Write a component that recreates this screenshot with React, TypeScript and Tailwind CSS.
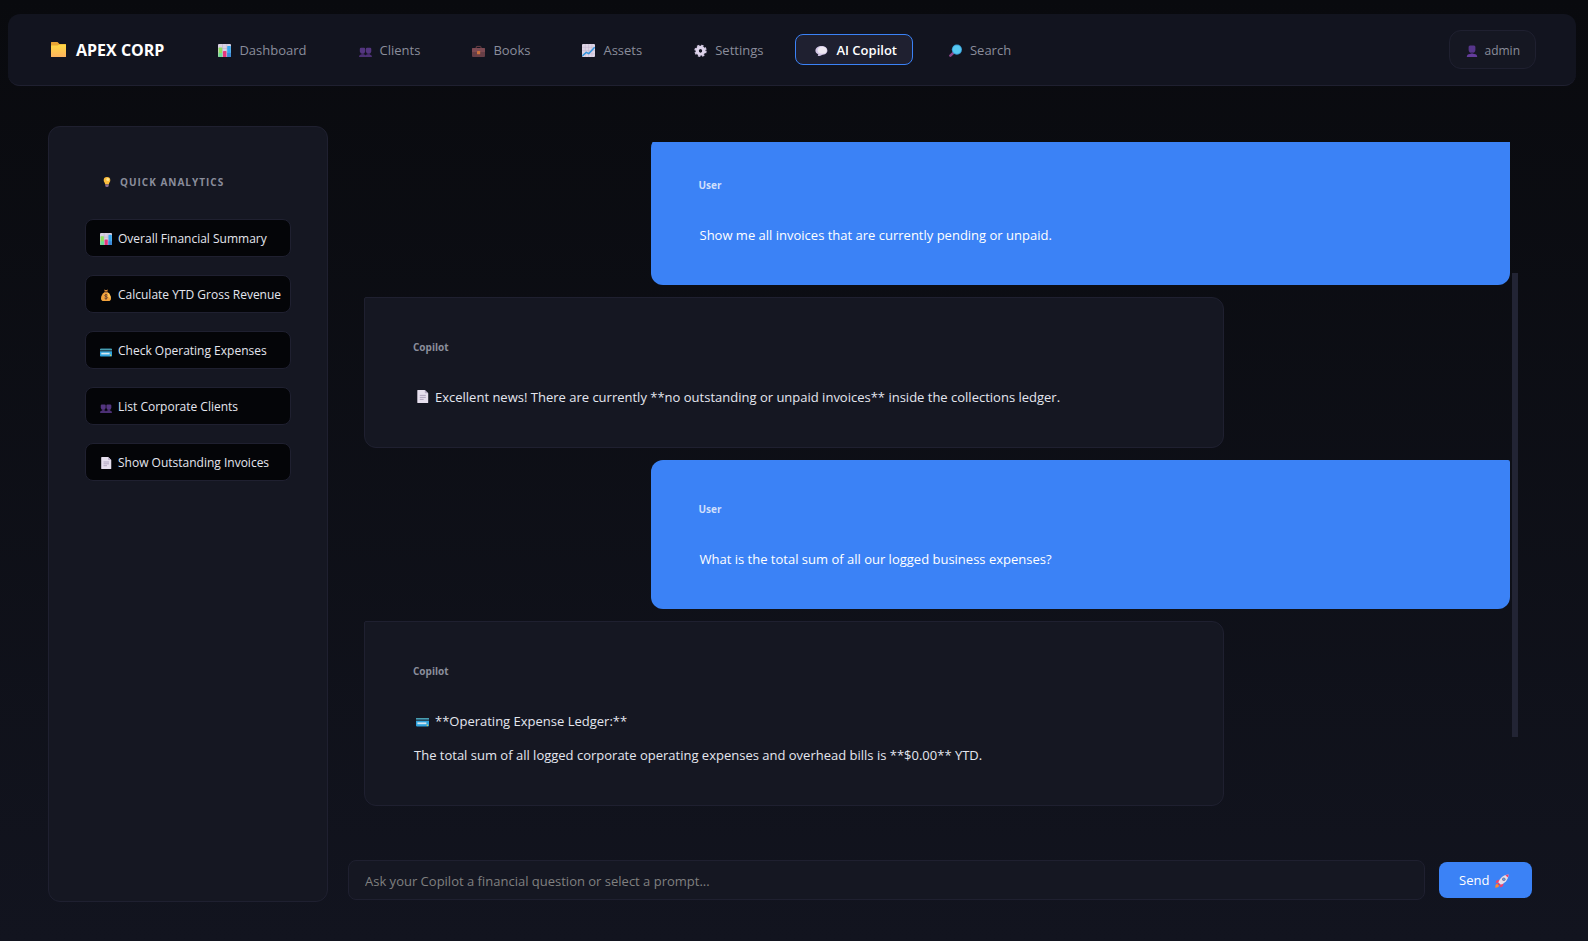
import React, { useState } from 'react';

interface IconProps {
  className?: string;
}

const FolderIcon: React.FC<IconProps> = ({ className }) => (
  <svg viewBox="0 0 15 15" className={className} aria-hidden="true">
    <defs>
      <linearGradient id="folder" x1="0" y1="0" x2="0" y2="1">
        <stop offset="0" stopColor="#ffd944" />
        <stop offset="1" stopColor="#fdb35e" />
      </linearGradient>
    </defs>
    <path d="M0 0.5Q0 0 .5 0H6.5L8.5 2H14.5Q15 2 15 2.5V8H0Z" fill="#e8a435" />
    <path d="M0 3.6H6.5L8.5 2.6H15V14.5Q15 15 14.5 15H.5Q0 15 0 14.5Z" fill="url(#folder)" />
  </svg>
);

const BarChartIcon: React.FC<IconProps> = ({ className }) => (
  <svg viewBox="0 0 13 13" className={className} aria-hidden="true">
    <rect width="13" height="13" rx="1" fill="#d9d0e2" />
    <path d="M0 4.5H13M0 8.5H13M4.5 0V13M8.8 0V13" stroke="#b9adc6" strokeWidth=".5" />
    <path d="M.6 4Q.6 3.4 1.2 3.4H3.6Q4.2 3.4 4.2 4V13H.6Z" fill="#8ee05c" />
    <path d="M.6 9H4.2V13H.6Z" fill="#6ddb9a" />
    <path d="M5 7.6Q5 7 5.6 7H7.8Q8.4 7 8.4 7.6V13H5Z" fill="#e8357c" />
    <path d="M9.2 2.6Q9.2 2 9.8 2H12.2Q12.8 2 12.8 2.6V13H9.2Z" fill="#35a5ee" />
    <path d="M9.2 9H12.8V13H9.2Z" fill="#3b86d6" />
  </svg>
);

const PeopleIcon: React.FC<IconProps> = ({ className }) => (
  <svg viewBox="0 0 13 13" className={className} aria-hidden="true">
    <path
      d="M.8 5Q.8 3.8 2 3.8H5Q6.2 3.8 6.2 5V7.4Q6 9.8 3.6 9.8T.8 7.4ZM6.9 5Q6.9 3.8 8.1 3.8H11.1Q12.3 3.8 12.3 5V7.4Q12.1 9.8 9.6 9.8T6.9 7.4Z"
      fill="#53357f"
    />
    <path d="M2.4 9.2H4.8V10.8H2.4ZM8.4 9.2H10.8V10.8H8.4Z" fill="#472c6d" />
    <path d="M0 13Q0 10.4 2.4 10.4H5Q6.4 10.4 6.5 11.5Q6.7 10.4 8 10.4H10.8Q13 10.4 13 13Z" fill="#4c3075" />
  </svg>
);

const BriefcaseIcon: React.FC<IconProps> = ({ className }) => (
  <svg viewBox="0 0 13 13" className={className} aria-hidden="true">
    <path d="M4.2 4.2V3Q4.2 2.4 4.8 2.4H8.4Q9 2.4 9 3V4.2" fill="none" stroke="#6d4047" strokeWidth="1" />
    <rect y="4" width="13" height="9" rx="1" fill="#673e46" />
    <path d="M0 4.8Q0 4 1 4H12Q13 4 13 4.8V8H0Z" fill="#7d4a52" />
    <rect x="5" y="7" width="3.2" height="3.2" rx=".5" fill="#c9713c" />
  </svg>
);

const LineChartIcon: React.FC<IconProps> = ({ className }) => (
  <svg viewBox="0 0 13 13" className={className} aria-hidden="true">
    <rect width="13" height="13" rx="1" fill="#ded5e6" />
    <path d="M0 3.3H13M0 6.6H13M0 9.9H13M3.3 0V13M6.6 0V13M9.9 0V13" stroke="#bfb3cc" strokeWidth=".5" />
    <path d="M.4 12L4.3 8.3L6.8 9.6L12.7 3.2" fill="none" stroke="#2f94dd" strokeWidth="1.5" />
  </svg>
);

const GearIcon: React.FC<IconProps> = ({ className }) => (
  <svg viewBox="0 0 13 13" className={className} aria-hidden="true">
    <circle cx="6.5" cy="6.8" r="5.4" fill="none" stroke="#cfc4de" strokeWidth="1.6" strokeDasharray="2.4 1.84" />
    <circle cx="6.5" cy="6.8" r="3.3" fill="none" stroke="#ddd3ea" strokeWidth="3.4" />
    <circle cx="6.5" cy="6.8" r="1.6" fill="#1a1a27" />
  </svg>
);

const BubbleIcon: React.FC<IconProps> = ({ className }) => (
  <svg viewBox="0 0 13 13" className={className} aria-hidden="true">
    <path
      d="M6.6 2C10 2 12.4 3.9 12.4 6.6S10 11 6.8 11C6 11.6 4.2 12.2 2.6 12C3.3 11.4 3.3 10.8 3.1 10.2C1.4 9.5.4 8.2.4 6.6C.4 3.9 3.2 2 6.6 2Z"
      fill="#d3c6e6"
    />
    <ellipse cx="7.2" cy="6.2" rx="4.5" ry="3.5" fill="#eee9f2" />
  </svg>
);

const SearchIcon: React.FC<IconProps> = ({ className }) => (
  <svg viewBox="0 0 13 13" className={className} aria-hidden="true">
    <path d="M1.4 11.6L4.8 8.4" stroke="#8b4688" strokeWidth="2.6" strokeLinecap="round" />
    <circle cx="7.9" cy="5.6" r="5.1" fill="#3aa0d8" />
    <circle cx="7.9" cy="5.6" r="4.1" fill="#56c8f0" />
  </svg>
);

const PersonIcon: React.FC<IconProps> = ({ className }) => (
  <svg viewBox="0 0 12 12" className={className} aria-hidden="true">
    <path d="M2.6 2Q2.6 .5 4 .5H8Q9.4 .5 9.4 2V5Q9.2 8 6 8T2.6 5Z" fill="#56358a" />
    <path d="M4.6 7H7.4V9.4H4.6Z" fill="#3f2765" />
    <path d="M.8 12Q.8 9 3.8 9H8.2Q11.2 9 11.2 12Z" fill="#643c9c" />
  </svg>
);

const BulbIcon: React.FC<IconProps> = ({ className }) => (
  <svg viewBox="0 0 10 10" className={className} aria-hidden="true">
    <path d="M5 0Q8.3 0 8.3 3.2C8.3 5 7 5.6 6.8 7.4H3.2C3 5.6 1.7 5 1.7 3.2Q1.7 0 5 0Z" fill="#fcbd3c" />
    <circle cx="5.8" cy="2.6" r="1.5" fill="#ffe58f" />
    <path d="M3.3 7.4H6.7V9Q6.6 10 5 10T3.3 9Z" fill="#8d6f96" />
  </svg>
);

const MoneyBagIcon: React.FC<IconProps> = ({ className }) => (
  <svg viewBox="0 0 12 12" className={className} aria-hidden="true">
    <path d="M4.2 .6L6 1.2L7.8 .4L7.3 2.6H4.8Z" fill="#f09a3a" />
    <path d="M4.6 3H7.5C9.5 4.4 11 6.8 11 9.2Q11 12 8.5 12H3.6Q1 12 1 9.2C1 6.8 2.6 4.4 4.6 3Z" fill="#f2a33c" />
    <path d="M7.5 3.6C9.5 4.8 10.7 7 10.6 9.2L8.4 8Z" fill="#ffc65b" />
    <path d="M4.4 2.6H7.7V3.5H4.4Z" fill="#8a5330" />
    <path
      d="M7.3 6.1Q6.9 5.6 6 5.6C4.4 5.6 4.4 7.5 6 7.6C7.8 7.7 7.7 9.8 6 9.8Q5 9.8 4.5 9.1M6 4.9V10.6"
      fill="none"
      stroke="#6e4530"
      strokeWidth="1"
    />
  </svg>
);

const CardIcon: React.FC<IconProps> = ({ className }) => (
  <svg viewBox="0 0 13 13" className={className} aria-hidden="true">
    <rect y="4" width="13" height="8.4" rx=".8" fill="#2fa3de" />
    <path d="M0 5.4V4.8Q0 4 .8 4H12.2Q13 4 13 4.8V5.4Z" fill="#4a9fb0" />
    <path d="M0 5.4H13V7H0Z" fill="#264a5b" />
    <path d="M1.4 8.4H10.4V10.2H1.4Z" fill="#d4e6ef" />
    <circle cx="11.4" cy="11.2" r=".8" fill="#e7cf4a" />
  </svg>
);

const DocumentIcon: React.FC<IconProps> = ({ className }) => (
  <svg viewBox="0 0 13 13" className={className} aria-hidden="true">
    <path d="M1.3 .6Q1.3 0 2 0H8.8L12.2 3.2V12.4Q12.2 13 11.6 13H2Q1.3 13 1.3 12.4Z" fill="#e6dfee" />
    <path d="M8.8 0L12.2 3.2H9.4Q8.8 3.2 8.8 2.6Z" fill="#b9adc8" />
    <path d="M3.8 5.4H9.8M3.8 7.4H9.8M3.8 9.4H7.6" stroke="#a89cb8" strokeWidth=".9" />
  </svg>
);

const RocketIcon: React.FC<IconProps> = ({ className }) => (
  <svg viewBox="0 0 14 14" className={className} aria-hidden="true">
    <path d="M4.4 5.4L1.6 6.6Q.6 8 .8 9.2L4 8.6ZM8.8 9.6L7.6 12.6Q6 13.6 4.8 13.2L5.6 10Z" fill="#f0406e" />
    <path d="M2.2 9.6Q0 10.6.2 13.8Q3.2 14 4.4 11.8Z" fill="#ff8a2e" />
    <path d="M2.6 10.2L5 7.6L6.8 9.2L4 11.6Z" fill="#e83a66" />
    <path d="M3.4 8.4C4.6 4 8.2 .9 13.6.4C13.1 5.8 10 9.4 5.6 10.6Z" fill="#e4dfea" />
    <path d="M10.4 1.2Q11.8.6 13.6.4Q13.4 2.2 12.8 3.6Z" fill="#f0406e" />
    <circle cx="8.8" cy="5.2" r="1.7" fill="#7a6b99" />
    <circle cx="8.8" cy="5.2" r="1" fill="#53a7e8" />
  </svg>
);

const navItems = [
  { label: 'Dashboard', Icon: BarChartIcon },
  { label: 'Clients', Icon: PeopleIcon },
  { label: 'Books', Icon: BriefcaseIcon },
  { label: 'Assets', Icon: LineChartIcon },
  { label: 'Settings', Icon: GearIcon },
  { label: 'AI Copilot', Icon: BubbleIcon },
  { label: 'Search', Icon: SearchIcon },
];

const quickPrompts = [
  { label: 'Overall Financial Summary', Icon: BarChartIcon },
  { label: 'Calculate YTD Gross Revenue', Icon: MoneyBagIcon },
  { label: 'Check Operating Expenses', Icon: CardIcon },
  { label: 'List Corporate Clients', Icon: PeopleIcon },
  { label: 'Show Outstanding Invoices', Icon: DocumentIcon },
];

interface Message {
  author: 'User' | 'Copilot';
  text: string;
  Icon?: React.FC<IconProps>;
}

const messages: Message[] = [
  { author: 'User', text: 'Show me all invoices that are currently pending or unpaid.' },
  {
    author: 'Copilot',
    text: 'Excellent news! There are currently **no outstanding or unpaid invoices** inside the collections ledger.',
    Icon: DocumentIcon,
  },
  { author: 'User', text: 'What is the total sum of all our logged business expenses?' },
  {
    author: 'Copilot',
    text: '**Operating Expense Ledger:**\n\nThe total sum of all logged corporate operating expenses and overhead bills is **$0.00** YTD.',
    Icon: CardIcon,
  },
];

const Header: React.FC = () => (
  <header className="ml-2 mr-3 flex h-[72px] shrink-0 items-center rounded-xl border-b border-[#1f2030] bg-[#12141f] pl-[43px] pr-10">
    <div className="flex items-center gap-2.5 text-base font-bold text-white">
      <FolderIcon className="size-[15px]" />
      APEX CORP
    </div>
    <nav className="ml-[34px] flex gap-4">
      {navItems.map(({ label, Icon }) => {
        const active = label === 'AI Copilot';
        return (
          <a
            key={label}
            href="#"
            className={`flex h-[31px] items-center gap-2 rounded-lg border pl-[19px] pr-[15px] pt-0.5 text-[13px] ${
              active
                ? 'border-[#3b82f6] bg-[#1f2030] font-semibold text-white'
                : 'border-transparent font-medium text-[#8a8d9b]'
            }`}
          >
            <Icon className="size-[13px]" />
            {label}
          </a>
        );
      })}
    </nav>
    <button
      type="button"
      className="ml-auto flex h-[39px] items-center gap-1.5 rounded-xl border border-[#1f2030] bg-[#151722] pl-4 pr-[15px] pt-0.5 text-xs font-medium text-[#8a8d9b]"
    >
      <PersonIcon className="size-3" />
      admin
    </button>
  </header>
);

const MessageBubble: React.FC<Message> = ({ author, text, Icon }) => {
  const isUser = author === 'User';
  return (
    <article
      className={`w-3/4 shrink-0 px-12 pb-[41px] pt-[41px] ${
        isUser
          ? 'self-end rounded-xl rounded-tr-[2px] bg-[#3b82f6] text-white'
          : 'rounded-xl rounded-tl-[2px] border border-[#1f2030] bg-[#151722] text-[#e4e6ef]'
      }`}
    >
      <h3 className={`mb-[34px] text-[10px] font-bold leading-4 ${isUser ? 'text-[#cfdffc]' : 'text-[#8a8d9b]'}`}>
        {author}
      </h3>
      <p className="whitespace-pre-line pl-px text-[13px] leading-[17px]">
        {Icon && <Icon className="ml-0.5 mr-1.5 inline-block size-[13px] align-[-1px]" />}
        {text}
      </p>
    </article>
  );
};

const App: React.FC = () => {
  const [question, setQuestion] = useState('');

  return (
    <div className="flex h-screen flex-col bg-linear-to-b from-[#090a0e] to-[#12141f] pt-3.5 font-['Open_Sans',sans-serif]">
      <Header />
      <main className="flex min-h-0 flex-1 gap-5 pb-[39px] pl-12 pr-14 pt-10">
        <aside className="w-[280px] shrink-0 rounded-xl border border-[#1f2030] bg-[#151722] px-9 pt-[47px]">
          <h2 className="flex h-4 items-center gap-2 pl-[17px] text-[10px] font-bold tracking-widest text-[#8a8d9b]">
            <BulbIcon className="size-2.5" />
            QUICK ANALYTICS
          </h2>
          <div className="mt-[29px] flex flex-col gap-[18px]">
            {quickPrompts.map(({ label, Icon }) => (
              <button
                key={label}
                type="button"
                onClick={() => setQuestion(label)}
                className="flex h-[38px] items-center gap-1.5 rounded-lg border border-[#1f2030] bg-[#040508] pl-3.5 pt-0.5 text-xs text-[#e4e6ef]"
              >
                <Icon className="size-3 shrink-0" />
                <span className="whitespace-nowrap">{label}</span>
              </button>
            ))}
          </div>
        </aside>
        <section className="flex min-w-0 flex-1 flex-col">
          <div className="mr-3.5 mt-4 flex min-h-0 flex-1 gap-0.5 overflow-hidden pl-4">
            <div className="-mt-1.5 flex min-w-0 flex-1 flex-col gap-3">
              {messages.map((message) => (
                <MessageBubble key={message.text} {...message} />
              ))}
            </div>
            <div className="mt-[131px] h-[464px] w-1.5 bg-[#222434]" />
          </div>
          <form className="mb-0.5 mt-4 flex items-center gap-3.5" onSubmit={(e) => e.preventDefault()}>
            <input
              type="text"
              aria-label="Question"
              value={question}
              onChange={(e) => setQuestion(e.target.value)}
              placeholder="Ask your Copilot a financial question or select a prompt..."
              className="h-10 min-w-0 flex-1 rounded-lg border border-[#1f2030] bg-[#151722] px-4 pt-0.5 text-[13px] text-[#e4e6ef] placeholder:text-[#808080] focus:outline-none"
            />
            <button
              type="submit"
              className="flex h-9 w-[93px] items-center gap-1.5 rounded-lg bg-[#3b82f6] pl-5 pt-0.5 text-[13px] font-medium text-white"
            >
              Send
              <RocketIcon className="size-[14px]" />
            </button>
          </form>
        </section>
      </main>
    </div>
  );
};

export default App;
